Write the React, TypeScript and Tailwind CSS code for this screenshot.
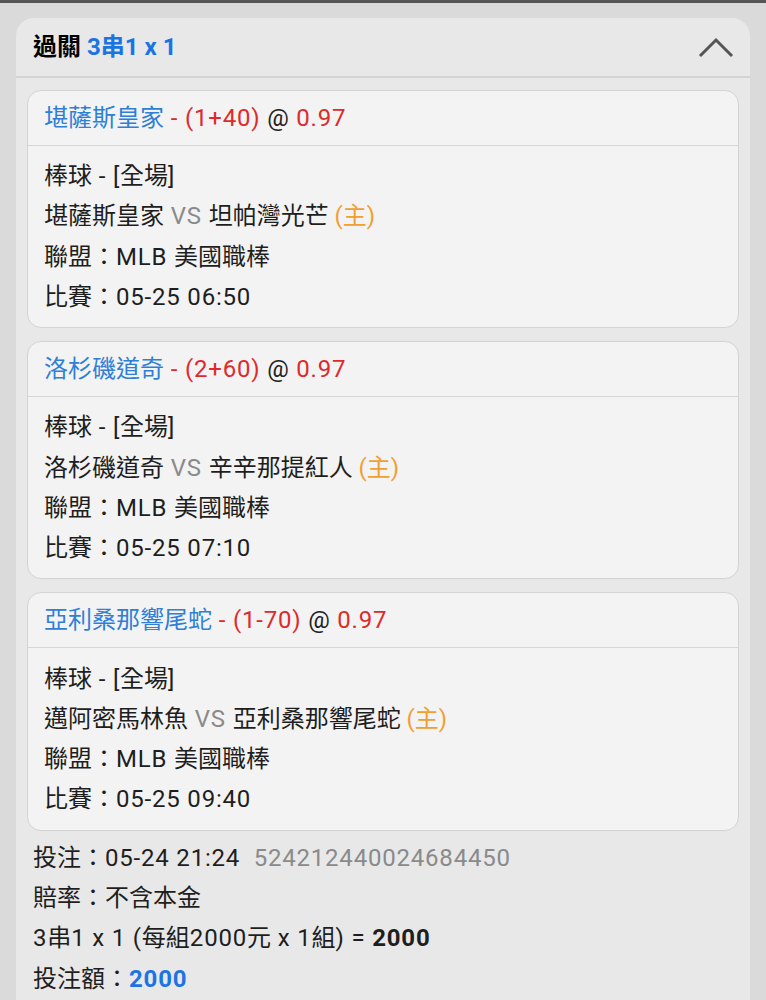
import React from "react";

const FONT = { fontFamily: 'Roboto, "Noto Sans CJK TC", sans-serif' };

type Bet = { pick: string; hc: string; home: string; away: string; time: string };

const bets: Bet[] = [
  { pick: "堪薩斯皇家", hc: "(1+40)", away: "堪薩斯皇家", home: "坦帕灣光芒", time: "05-25 06:50" },
  { pick: "洛杉磯道奇", hc: "(2+60)", away: "洛杉磯道奇", home: "辛辛那提紅人", time: "05-25 07:10" },
  { pick: "亞利桑那響尾蛇", hc: "(1-70)", away: "邁阿密馬林魚", home: "亞利桑那響尾蛇", time: "05-25 09:40" },
];

function L({ children, className = "" }: { children: React.ReactNode; className?: string }) {
  return <span className={"tracking-[0.8px] " + className}>{children}</span>;
}

function Card({ b }: { b: Bet }) {
  return (
    <div className="rounded-[14px] border border-[#d3d3d3] bg-[#f3f3f3]">
      <div className="h-[55px] flex items-center px-[16px] border-b border-[#d6d6d6] text-[24px] leading-none whitespace-pre">
        <span className="text-[#2f7fd6]">{b.pick}</span>
        <L className="text-[#de2a2a]"> - {b.hc}</L>
        <L className="text-[#222]"> @ </L>
        <L className="text-[#de2a2a]">0.97</L>
      </div>
      <div className="px-[16px] pt-[10px] pb-[10px] text-[24px] text-[#1e1e1e] whitespace-pre">
        <div className="h-[40.3px] flex items-center">
          <span>棒球</span>
          <L> - [</L>
          <span>全場</span>
          <L>]</L>
        </div>
        <div className="h-[40.3px] flex items-center">
          <span>{b.away}</span>
          <L className="text-[#8a8a8a]"> VS </L>
          <span>{b.home}</span>
          <span className="text-[#f0a032]"> (主)</span>
        </div>
        <div className="h-[40.3px] flex items-center">
          <span>聯盟：</span>
          <L>MLB </L>
          <span>美國職棒</span>
        </div>
        <div className="h-[40.3px] flex items-center">
          <span>比賽：</span>
          <L>{b.time}</L>
        </div>
      </div>
    </div>
  );
}

function Line({ children }: { children: React.ReactNode }) {
  return <div className="h-[40.3px] flex items-center whitespace-pre">{children}</div>;
}

export default function App() {
  return (
    <div style={FONT} className="w-[766px] h-[1000px] bg-[#dadada] overflow-hidden">
      <div className="h-[3px] bg-[#555]" />
      <div className="pt-[15px] pl-[16px] pr-[16px]">
        <div className="rounded-t-[18px] bg-[#e8e8e8] h-[1100px]">
          <div className="h-[60px] flex items-center justify-between pl-[17px] pr-[16px] border-b-2 border-[#d4d4d4]">
            <div className="text-[24px] font-bold whitespace-pre leading-none">
              <span className="text-black">過關 </span>
              <span className="text-[#1b74e4]">3串1 x 1</span>
            </div>
            <svg width="36" height="22" viewBox="0 0 36 22">
              <path d="M2 20 L18 4 L34 20" fill="none" stroke="#555" strokeWidth="3" />
            </svg>
          </div>
          <div className="px-[11px] pt-[12px] flex flex-col gap-[13px]">
            {bets.map((b, i) => (
              <Card key={i} b={b} />
            ))}
          </div>
          <div className="pl-[17px] pt-[7px] text-[24px] text-[#1e1e1e]">
            <Line>
              <span>投注：</span>
              <L>05-24 21:24  </L>
              <L className="text-[#8a8a8a]">524212440024684450</L>
            </Line>
            <Line>賠率：不含本金</Line>
            <Line>
              <L>3</L>
              <span>串</span>
              <L>1 x 1 (</L>
              <span>每組</span>
              <L>2000</L>
              <span>元</span>
              <L> x 1</L>
              <span>組</span>
              <L>) = </L>
              <L className="font-bold">2000</L>
            </Line>
            <Line>
              <span>投注額：</span>
              <L className="font-bold text-[#1b74e4]">2000</L>
            </Line>
          </div>
        </div>
      </div>
    </div>
  );
}
